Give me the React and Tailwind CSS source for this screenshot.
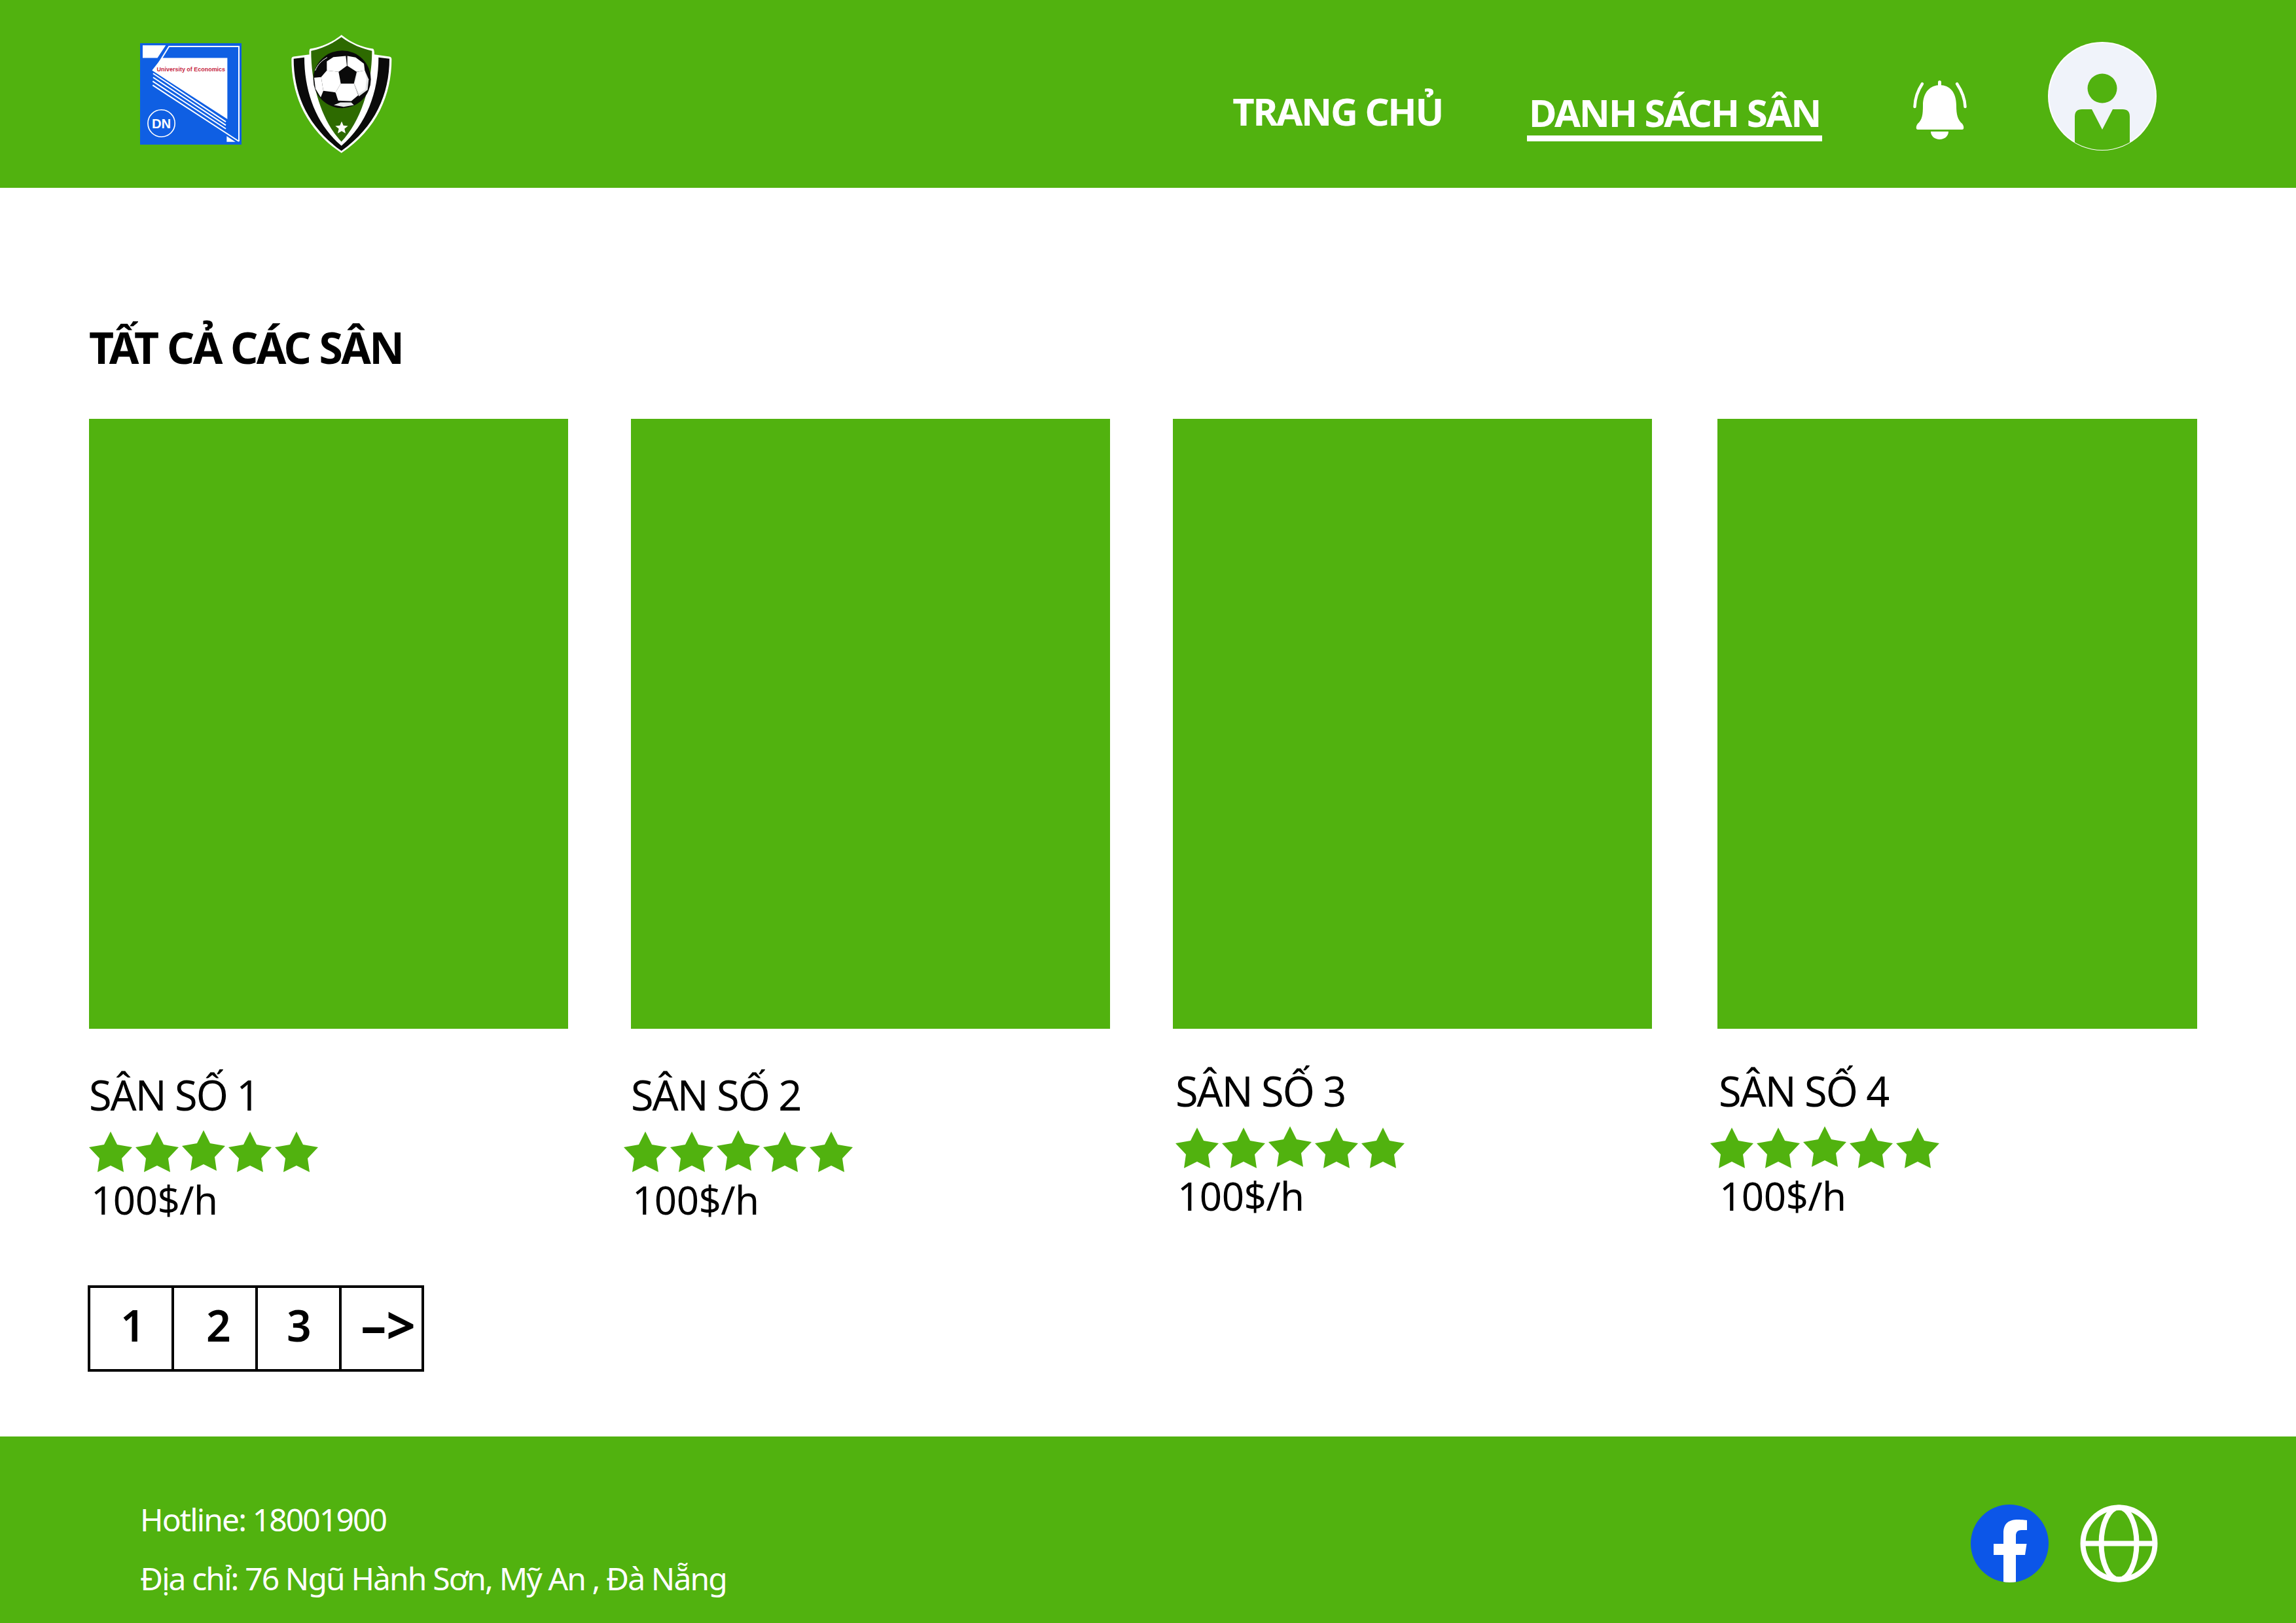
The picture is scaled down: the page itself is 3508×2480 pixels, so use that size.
const courts = [
  { name: "SÂN SỐ 1", cardClass: "w-[732px] mr-[96px]", nameClass: "mt-[61px]", starsClass: "ml-0", priceClass: "ml-[3px]" },
  { name: "SÂN SỐ 2", cardClass: "w-[732px] mr-[96px]", nameClass: "mt-[61px]", starsClass: "ml-[-11px]", priceClass: "ml-[2px]" },
  { name: "SÂN SỐ 3", cardClass: "w-[732px] mr-[100px]", nameClass: "mt-[55px] ml-[4px]", starsClass: "ml-[4px]", priceClass: "ml-[7px]" },
  { name: "SÂN SỐ 4", cardClass: "w-[733px]", nameClass: "mt-[55px] ml-[2px]", starsClass: "ml-[-11px]", priceClass: "ml-[3px]" },
];

function EconomicsLogo() {
  return (
    <svg viewBox="72 47 466 466" className="w-[155px] h-[155px] shrink-0">
      <rect x="72" y="47" width="466" height="466" fill="#0f5fe3" />
      <polygon points="84,57 190,57 152,115 84,115" fill="#fff" />
      <polyline points="152,148 205,62 526,62 526,498" fill="none" stroke="#fff" strokeWidth="6" />
      <polygon points="172,115 473,115 473,396 127,172" fill="#fff" />
      <polyline points="132,186 466,408" fill="none" stroke="#fff" strokeWidth="6" />
      <polyline points="132,204 466,424" fill="none" stroke="#fff" strokeWidth="6" />
      <polyline points="130,222 466,440" fill="none" stroke="#fff" strokeWidth="6" />
      <polyline points="130,240 526,498" fill="none" stroke="#fff" strokeWidth="6" />
      <polygon points="470,474 510,500 470,500" fill="#fff" />
      <text x="149" y="176" fontFamily="Liberation Sans" fontWeight="700" fontSize="30" fill="#c5253f" textLength="314" lengthAdjust="spacingAndGlyphs">University of Economics</text>
      <circle cx="170" cy="415" r="62" fill="none" stroke="#fff" strokeWidth="5" />
      <text x="170" y="437" textAnchor="middle" fontFamily="Liberation Sans" fontWeight="700" fontSize="62" fill="#fff" textLength="88" lengthAdjust="spacingAndGlyphs">DN</text>
    </svg>
  );
}

function ShieldLogo() {
  return (
    <svg viewBox="75 65 462 548" className="w-[154px] h-[183px] shrink-0 ml-[76px]">
      <path d="M305 68C350 105 400 125 450 132Q456 135 456 158L525 168Q535 170 535 180C535 340 470 500 305 610C140 500 76 340 76 180Q76 170 85 168L158 158Q156 135 162 132C210 125 260 105 305 68Z" fill="#fff" />
      <path d="M86 178L135 172C135 330 190 480 305 577C420 480 475 330 475 172L525 178C525 340 460 490 305 600C150 490 86 340 86 178Z" fill="#0a0a0a" />
      <path d="M305 79C260 112 210 132 166 142C166 310 220 470 305 558C390 470 445 310 445 142C400 132 350 112 305 79Z" fill="#2d6a00" />
      <circle cx="308" cy="272" r="132" fill="#0a0a0a" />
      {/* white panels of the ball */}
      <g fill="#fff">
        <polygon points="238,190 268,170 325,165 330,210 292,238 238,232" />
        <polygon points="332,165 370,172 408,200 412,232 375,238 332,210" />
        <polygon points="412,232 430,272 425,320 385,350 362,292 375,238" fill="#e2e4e4" />
        <polygon points="212,262 238,232 292,238 302,292 278,332 222,325" />
        <polygon points="302,292 362,292 382,345 350,372 290,370 278,332" />
        <polygon points="180,265 212,262 222,325 210,355 186,315" />
        <polygon points="270,390 300,378 350,378 362,390 315,398" fill="#e8eaea" />
      </g>
      <path d="M412 232L420 270L415 318L385 338L366 292L378 240Z" fill="#fff" />
      <path d="M185 232C195 205 215 185 240 172" fill="none" stroke="#fff" strokeWidth="3" />
      <polygon points="306,465 314,484 335,486 319,499 324,520 306,509 288,520 293,499 277,486 298,484" fill="#fff" />
    </svg>
  );
}

function Bell() {
  return (
    <svg viewBox="0 0 82 90" className="w-[82px] h-[90px] shrink-0 self-start mt-[123px]">
      <g fill="#fff">
        <path d="M41 7C56 7 66 18 66 38C66 52 68 60 75 66C78 70 78 75 75 75H7C4 75 4 70 7 66C14 60 15 52 15 38C15 18 26 7 41 7Z" />
        <rect x="38" y="0" width="5" height="12" rx="2.5" />
        <path d="M27 78H54C54 85 48 90 40.500 90C33 90 27 85 27 78Z" />
      </g>
      <g fill="none" stroke="#fff" strokeWidth="4.5" strokeLinecap="round">
        <path d="M14 5C8 14 3 26 2.500 40" />
        <path d="M67 5C73 14 79 26 79.500 40" />
      </g>
    </svg>
  );
}

function Avatar() {
  return (
    <svg viewBox="0 0 166 166" className="w-[166px] h-[166px] shrink-0 self-start mt-[64px] ml-[124px]">
      <defs>
        <clipPath id="avatar-clip"><circle cx="83" cy="83" r="82" /></clipPath>
      </defs>
      <circle cx="83" cy="83" r="83" fill="#fff" />
      <circle cx="83" cy="83" r="81" fill="#f0f3fa" />
      <circle cx="83" cy="71" r="22.5" fill="#51b20f" />
      <path clipPath="url(#avatar-clip)" d="M41 114Q41 103 52 103H67L83 134L99 103H114Q125 103 125 114V170H41Z" fill="#51b20f" />
    </svg>
  );
}

function Star({ className = "" }) {
  return (
    <svg viewBox="0 0 66 62" className={`w-[66px] h-[62px] shrink-0 ${className}`}>
      <polygon points="33,0 43,20 66,24 50,41 53,62 33,52 13,62 16,41 0,24 23,20" fill="#51b20f" />
    </svg>
  );
}

function CourtCard({ court }) {
  return (
    <div className={court.cardClass}>
      <div className="h-[932px] bg-[#51b20f]" />
      <p className={`text-[63px] leading-[80px] tracking-[-2px] text-black ${court.nameClass}`}>{court.name}</p>
      <div className={`flex gap-[5px] mt-[16px] ${court.starsClass}`}>
        <Star />
        <Star />
        <Star className="-mt-[2px]" />
        <Star />
        <Star />
      </div>
      <p className={`text-[60px] leading-[76px] tracking-[-0.5px] text-black mt-[4px] ${court.priceClass}`}>100$/h</p>
    </div>
  );
}

function Pager() {
  const cells = [
    { label: "1", cls: "pl-[6px] text-[66px] font-semibold" },
    { label: "2", cls: "pl-[12px] text-[66px] font-semibold" },
    { label: "3", cls: "pl-[2px] text-[66px] font-semibold" },
    { label: "–>", cls: "pl-[20px] text-[78px] font-bold" },
  ];
  return (
    <div className="grid grid-cols-[128px_128px_128px_1fr] w-[514px] h-[132px] border-[4px] border-black -ml-[2px]">
      {cells.map((c, i) => (
        <div
          key={c.label}
          className={`flex items-center justify-center text-black leading-none pb-[12px] ${c.cls} ${i < 3 ? "border-r-[4px] border-black" : ""}`}
        >
          {c.label}
        </div>
      ))}
    </div>
  );
}

export default function App() {
  return (
    <div className="w-[3508px] h-[2480px] flex flex-col bg-white font-['Noto_Sans',sans-serif]">
      {/* Header */}
      <header className="h-[287px] shrink-0 bg-[#51b20f] flex items-center pl-[214px] pr-[213px]">
        <EconomicsLogo />
        <ShieldLogo />
        <nav className="ml-auto self-start mt-[135px] flex items-start text-white font-bold text-[58px] leading-[70px] tracking-[-2.3px]">
          <a className="mr-[129px]">TRANG CHỦ</a>
          <a className="mr-[139px] mt-[2px] px-[3px] border-b-[9px] border-white">DANH SÁCH SÂN</a>
        </nav>
        <Bell />
        <Avatar />
      </header>

      {/* Courts */}
      <main className="flex-1 px-[136px] pt-[203px]">
        <h1 className="text-[66px] leading-[80px] font-bold tracking-[-2.7px] text-black">TẤT CẢ CÁC SÂN</h1>
        <div className="flex mt-[70px]">
          {courts.map((court) => (
            <CourtCard key={court.name} court={court} />
          ))}
        </div>
        <div className="mt-[93px]">
          <Pager />
        </div>
      </main>

      {/* Footer */}
      <footer className="h-[285px] shrink-0 bg-[#51b20f] flex items-start pt-[82px] pl-[214px] pr-[211px] text-white">
        <div className="text-[48px] leading-[90px] tracking-[-1.9px]">
          <p>Hotline: 18001900</p>
          <p>Địa chỉ: 76 Ngũ Hành Sơn, Mỹ An , Đà Nẵng</p>
        </div>
        <div className="ml-auto flex items-center gap-[48px] mt-[22px]">
          <svg viewBox="0 0 119 119" className="w-[119px] h-[119px]">
            <defs>
              <clipPath id="fb-clip"><circle cx="59.5" cy="59.5" r="59.5" /></clipPath>
            </defs>
            <circle cx="59.5" cy="59.5" r="59.5" fill="#0c56e8" />
            <path clipPath="url(#fb-clip)" d="M50 119V77H35V60H50V44C50 28 59 23 72 23C78 23 86 24 86 24V39H78C70 39 69 44 69 48V60H85.500L83 77H69V119Z" fill="#fff" />
          </svg>
          <svg viewBox="0 0 119 119" className="w-[119px] h-[119px]" fill="none" stroke="#fff" strokeWidth="8">
            <circle cx="59.500" cy="59.500" r="55" />
            <ellipse cx="59.500" cy="59.500" rx="27" ry="55" />
            <path d="M4 59.500H115" />
          </svg>
        </div>
      </footer>
    </div>
  );
}
